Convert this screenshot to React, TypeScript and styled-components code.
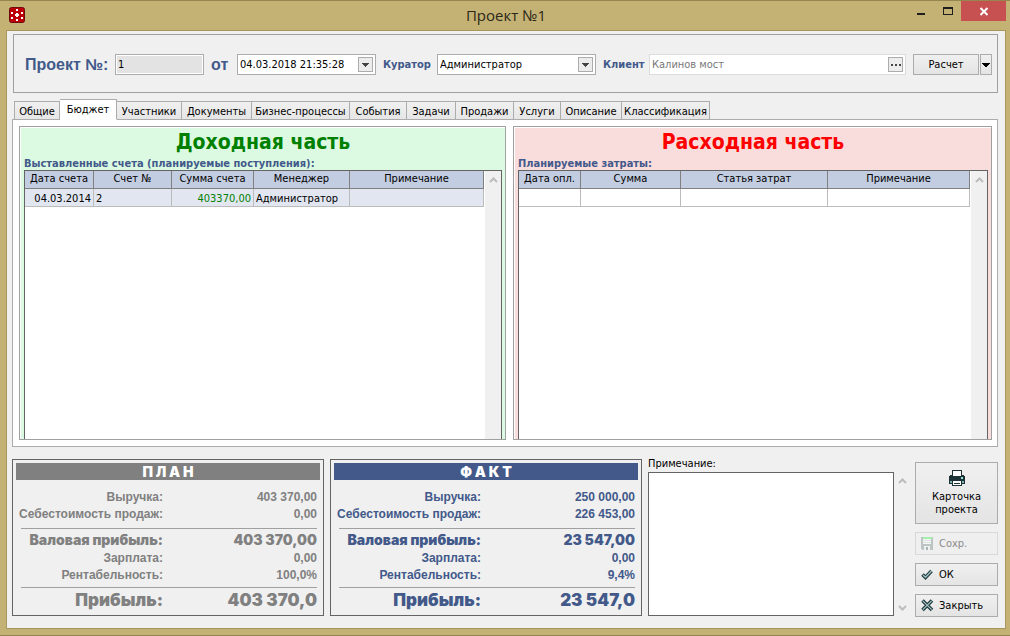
import React from "react";
import styled, { createGlobalStyle, css } from "styled-components";

const ui = `"DejaVu Sans Condensed", "DejaVu Sans", Tahoma, sans-serif`;
const arial = `"Liberation Sans", Arial, sans-serif`;
const heavy = `Inter, "Arial Black", sans-serif`;
const blue = "#42598a";
const line = "#a0a0a0";

const Global = createGlobalStyle`
  * { box-sizing: border-box; }
  body { margin: 0; font-family: ${ui}; font-stretch: condensed; font-size: 11px; line-height: 14px; color: #000; }
  button, input, select, textarea { font: inherit; color: inherit; border-radius: 0; }
`;

const Window = styled.main`
  min-height: 100vh;
  display: flex;
  flex-direction: column;
  background: #c4b174;
  border: 1px solid #95854f;
  border-width: 1px 0;
  padding: 0 4px 6px 6px;
`;

const TitleBar = styled.header`
  height: 29px;
  display: grid;
  grid-template-columns: 1fr auto 1fr;
  align-items: start;
`;
const AppIcon = styled.svg`
  width: 16px;
  height: 16px;
  margin: 6px 0 0 3px;
`;
const Title = styled.h1`
  margin: 0;
  font: 400 15px/29px "Open Sans", sans-serif;
  color: #2b2718;
`;
const Controls = styled.div`
  display: flex;
  justify-content: flex-end;
`;
const Control = styled.button<{ $w: number; $close?: boolean }>`
  width: ${(p) => p.$w}px;
  height: 20px;
  padding: 0;
  border: 0;
  background: ${(p) => (p.$close ? "#c75050" : "transparent")};
  svg { display: block; margin: 0 auto; }
`;

const Client = styled.div`
  flex: 1;
  display: flex;
  flex-direction: column;
  border: 1px solid #a8975c;
  background: #f0f0f0;
  padding: 3px 7px 12px 5px;
`;

const Toolbar = styled.form`
  display: flex;
  align-items: center;
  height: 59px;
  margin-left: 1px;
  padding: 2px 5px 0 11px;
  border: 1px solid ${line};
`;
const Label = styled.label<{ $w: number; $big?: boolean }>`
  flex: none;
  width: ${(p) => p.$w}px;
  color: ${blue};
  font-weight: 700;
  white-space: nowrap;
  ${(p) => p.$big && css`font: 700 16px/20px ${arial};`}
`;
const Field = styled.div<{ $w?: number; $muted?: boolean; $fill?: string }>`
  position: relative;
  flex: ${(p) => (p.$w ? `none` : `1 1 0`)};
  ${(p) => p.$w && css`width: ${p.$w}px;`}
  height: 21px;
  display: flex;
  align-items: center;
  padding: 1px;
  margin-right: 7px;
  border: 1px solid ${(p) => (p.$muted ? "#dcdcdc" : "#acacac")};
  background: #fff;
  color: ${(p) => (p.$muted ? "#787878" : "#000")};
  input, select {
    flex: 1;
    min-width: 0;
    width: 100%;
    height: 17px;
    padding: 0 1px;
    border: 0;
    outline: 0;
    appearance: none;
    background: ${(p) => p.$fill ?? "transparent"};
  }
`;
const FieldButton = styled.button`
  flex: none;
  width: 15px;
  height: 15px;
  margin-right: 1px;
  padding: 0;
  border: 1px solid #acacac;
  background: #ececec;
  svg { display: block; margin: auto; }
`;
const SelectArrow = styled.span`
  position: absolute;
  right: 2px;
  top: 2px;
  width: 15px;
  height: 15px;
  border: 1px solid #acacac;
  background: #ececec;
  pointer-events: none;
  svg { display: block; }
`;
const Button = styled.button<{ $w?: number; $h?: number; $stack?: boolean }>`
  flex: none;
  display: flex;
  align-items: center;
  flex-direction: ${(p) => (p.$stack ? "column" : "row")};
  justify-content: ${(p) => (p.$stack || p.$w ? "center" : "flex-start")};
  gap: ${(p) => (p.$stack ? 4 : 5)}px;
  width: ${(p) => (p.$w ? `${p.$w}px` : "100%")};
  height: ${(p) => p.$h ?? 23}px;
  padding: 0 ${(p) => (p.$w ? 0 : 5)}px;
  line-height: 13px;
  border: 1px solid #acacac;
  background: linear-gradient(#f0f0f0, #e4e4e4);
  &:disabled { color: #8b8b8b; border-color: #d9d9d9; background: #efefef; }
`;
const SplitButton = styled.div`
  flex: none;
  display: flex;
  gap: 1px;
`;

const Tabs = styled.div`
  display: flex;
  align-items: flex-end;
  height: 21px;
  margin: 6px 0 -1px 2px;
`;
const Tab = styled.button<{ $w: number; $active?: boolean }>`
  width: ${(p) => p.$w}px;
  height: 19px;
  padding: 2px 0 0;
  white-space: nowrap;
  border: 1px solid #acacac;
  border-left-width: 0;
  background: linear-gradient(#f0f0f0, #e6e6e6);
  &:first-child { border-left-width: 1px; }
  ${(p) => p.$active && css`
    height: 21px;
    padding: 0;
    background: #fff;
    border-bottom-color: #fff;
    position: relative;
  `}
`;
const Pane = styled.section`
  flex: 1;
  display: grid;
  grid-template-columns: 487fr 479fr;
  gap: 7px;
  padding: 6px 5px 6px 6px;
  border: 1px solid #acacac;
  background: #fff;
`;
const Side = styled.section<{ $bg: string }>`
  display: flex;
  flex-direction: column;
  min-width: 0;
  padding: 2px 3px 0 4px;
  border: 1px solid ${line};
  background: ${(p) => p.$bg};
  box-shadow: inset 1px 1px 0 #fff;
`;
const SideTitle = styled.h2<{ $color: string }>`
  margin: 0;
  text-align: center;
  font-size: 21px;
  line-height: 26px;
  color: ${(p) => p.$color};
`;
const SideCaption = styled.h3`
  margin: 0;
  height: 15px;
  font-size: 11px;
  line-height: 17px;
  color: ${blue};
`;
const GridBox = styled.div`
  flex: 1;
  display: flex;
  justify-content: space-between;
  gap: 1px;
  border: 1px solid #646464;
  border-bottom: 0;
  background: #fff;
`;
const Grid = styled.table`
  flex: 1;
  align-self: flex-start;
  table-layout: fixed;
  border-collapse: separate;
  border-spacing: 0;
  th, td {
    height: 18px;
    padding: 0 2px;
    border: 0 solid #808080;
    border-width: 0 1px 1px 0;
    white-space: nowrap;
    overflow: hidden;
    line-height: 15px;
  }
  th { font-weight: 400; background: #c3cde2; padding-bottom: 2px; }
  td { border-color: #bcbcbc; padding-top: 2px; }
`;
const Row = styled.tr<{ $selected?: boolean }>`
  background: ${(p) => (p.$selected ? "#e2e6f1" : "#fff")};
`;
const Cell = styled.td<{ $right?: boolean; $color?: string }>`
  text-align: ${(p) => (p.$right ? "right" : "left")};
  color: ${(p) => p.$color ?? "#000"};
`;
const ScrollTrack = styled.div<{ $wide?: boolean }>`
  flex: none;
  width: ${(p) => (p.$wide ? 17 : 16)}px;
  display: flex;
  flex-direction: column;
  justify-content: space-between;
  align-items: center;
  padding: 5px 0 4px;
  background: #f0f0f0;
`;

const Bottom = styled.footer`
  display: flex;
  margin-top: 12px;
  height: 157px;
`;
const Card = styled.section<{ $color: string }>`
  flex: 0 1 312px;
  margin-right: 6px;
  padding: 3px;
  border: 1px solid #646464;
  color: ${(p) => p.$color};
`;
const CardTitle = styled.h2<{ $bg: string }>`
  margin: 0 0 9px;
  height: 17px;
  text-align: center;
  font: 900 14px/17px ${heavy};
  white-space: pre;
  color: #fff;
  background: ${(p) => p.$bg};
`;
const Totals = styled.dl`
  margin: 0;
  padding: 0 3px 0 5px;
`;
const TotalRow = styled.div<{ $size?: "gross" | "net" }>`
  display: grid;
  grid-template-columns: 142px 1fr;
  text-align: right;
  white-space: nowrap;
  font: 700 12px/17px ${arial};
  dt, dd { margin: 0; }
  dt { justify-self: end; }
  ${(p) => p.$size === "gross" && css`
    margin-top: 5px;
    padding-top: 1px;
    border-top: 1px solid ${line};
    font: 900 14px/20px ${heavy};
  `}
  ${(p) => p.$size === "net" && css`
    margin-top: 3px;
    border-top: 1px solid ${line};
    font: 900 17px/24px ${heavy};
  `}
`;
const Note = styled.div`
  flex: 1;
  min-width: 0;
  display: flex;
  flex-direction: column;
  label { height: 13px; line-height: 10px; }
`;
const NoteBody = styled.div`
  display: flex;
  height: 144px;
  textarea {
    flex: 1;
    min-width: 0;
    resize: none;
    border: 1px solid #646464;
    background: #fff;
    outline: 0;
  }
`;
const Actions = styled.div`
  flex: none;
  width: 83px;
  margin-left: 4px;
  padding-top: 3px;
  display: flex;
  flex-direction: column;
  gap: 8px;
`;

const Down = ({ color = "#444" }: { color?: string }) => (
  <svg width="13" height="13" shapeRendering="crispEdges"><path d="M3 5h7v1H3zM4 6h5v1H4zM5 7h3v1H5zM6 8h1v1H6z" fill={color} /></svg>
);
const Chevron = ({ down }: { down?: boolean }) => (
  <svg width="9" height="8" viewBox="0 0 9 8"><path d={down ? "M1 2L4.5 5.5L8 2" : "M1 6L4.5 2.5L8 6"} fill="none" stroke="#bdbdbd" strokeWidth="2" /></svg>
);
const Printer = () => (
  <svg width="16" height="16" shapeRendering="crispEdges">
    <path d="M3 0h10v5h2v1h1v8h-3v2H3v-2H0V6h1V5h2z" fill="#1d3336" />
    <path d="M4 1h8v5H4zM4 11h8v4H4z" fill="#fff" />
    <path d="M5 13h6v1H5z" fill="#1d3336" />
    <path d="M12 7h2v2h-2z" fill="#8fe0e0" />
    <path d="M1 11h2v2H1zM13 11h2v2h-2z" fill="#7fb0b0" />
  </svg>
);
const Floppy = () => (
  <svg width="13" height="13" shapeRendering="crispEdges">
    <path d="M0 0h12v13H1v-1H0z" fill="#bcc5c4" />
    <path d="M2 0h9v2H2z" fill="#a5efac" />
    <path d="M2 2h8v5H2z" fill="#f4f7f6" />
    <path d="M2 3h8v1H2zM2 5h8v1H2z" fill="#dce3e1" />
    <path d="M3 9h6v4H3z" fill="#eef2f1" />
    <path d="M5 10h2v3H5z" fill="#a9b4b2" />
  </svg>
);
const Check = () => (
  <svg width="13" height="13" viewBox="0 0 13 13">
    <path d="M1.5 6.5L4.5 9.5L10.5 3" fill="none" stroke="#223b3f" strokeWidth="3.6" />
    <path d="M2 7L4.5 9.3L10.5 3" fill="none" stroke="#9fc3c3" strokeWidth="1.3" />
  </svg>
);
const Cross = () => (
  <svg width="13" height="13" viewBox="0 0 13 13">
    <path d="M1.5 1.5L11 11M11 1.5L1.5 11" fill="none" stroke="#223b3f" strokeWidth="3.6" />
    <path d="M1.8 1.8L10.7 10.7M10.7 1.8L1.8 10.7" fill="none" stroke="#a9caca" strokeWidth="1.1" />
  </svg>
);

const tabs: [string, number][] = [
  ["Общие", 46], ["Бюджет", 57], ["Участники", 65], ["Документы", 70], ["Бизнес-процессы", 98], ["События", 57],
  ["Задачи", 49], ["Продажи", 58], ["Услуги", 47], ["Описание", 61], ["Классификация", 88],
];

type ColumnSpec = [string, number];
function DataGrid({ columns, children }: { columns: ColumnSpec[]; children: React.ReactNode }) {
  const total = columns.reduce((sum, c) => sum + c[1], 0);
  return (
    <GridBox>
      <Grid>
        <colgroup>{columns.map(([name, w]) => <col key={name} style={{ width: `${(w / total) * 100}%` }} />)}</colgroup>
        <thead><tr>{columns.map(([name]) => <th key={name} scope="col">{name}</th>)}</tr></thead>
        <tbody>{children}</tbody>
      </Grid>
      <ScrollTrack><Chevron /></ScrollTrack>
    </GridBox>
  );
}

function Summary({ title, bg, color, values }: { title: string; bg: string; color: string; values: string[] }) {
  const names = ["Выручка:", "Себестоимость продаж:", "Валовая прибыль:", "Зарплата:", "Рентабельность:", "Прибыль:"];
  return (
    <Card $color={color}>
      <CardTitle $bg={bg}>{title}</CardTitle>
      <Totals>
        {names.map((name, i) => (
          <TotalRow key={name} $size={i === 2 ? "gross" : i === 5 ? "net" : undefined}>
            <dt>{name}</dt>
            <dd>{values[i]}</dd>
          </TotalRow>
        ))}
      </Totals>
    </Card>
  );
}

export default function App() {
  return (
    <>
      <Global />
      <Window>
        <TitleBar>
          <AppIcon viewBox="0 0 16 16">
            <rect x="0.5" y="0.5" width="15" height="15" rx="2" fill="#bd0008" stroke="#6d0a0c" />
            <path d="M7 2h2v2H7zM7 12h2v2H7zM2 5h2v2H2zM12 5h2v2h-2zM2 10h2v2H2zM12 10h2v2h-2zM7 6h2v1h1v2H9v1H7V9H6V7h1z" fill="#fff" />
          </AppIcon>
          <Title>Проект №1</Title>
          <Controls>
            <Control $w={27} aria-label="Свернуть"><svg width="27" height="20"><path d="M10 12h8v2h-8z" fill="#1e1e1e" /></svg></Control>
            <Control $w={27} aria-label="Развернуть"><svg width="27" height="20"><path d="M9 6h10v8H9zM10 8v5h8V8z" fillRule="evenodd" fill="#1e1e1e" /></svg></Control>
            <Control $w={45} $close aria-label="Закрыть окно"><svg width="45" height="20"><path d="M19.5 7L26.5 14M26.5 7L19.5 14" stroke="#fff" strokeWidth="2" /></svg></Control>
          </Controls>
        </TitleBar>
        <Client>
          <Toolbar onSubmit={(e) => e.preventDefault()}>
            <Label $w={90} $big htmlFor="num">Проект №:</Label>
            <Field $w={89} $fill="#e3e3e3"><input id="num" defaultValue="1" /></Field>
            <Label $w={26} $big htmlFor="date">от</Label>
            <Field $w={139}>
              <input id="date" defaultValue="04.03.2018 21:35:28" />
              <FieldButton type="button" aria-label="Выбрать дату"><Down /></FieldButton>
            </Field>
            <Label $w={54} htmlFor="curator">Куратор</Label>
            <Field $w={159}>
              <select id="curator"><option>Администратор</option></select>
              <SelectArrow><Down /></SelectArrow>
            </Field>
            <Label $w={46} htmlFor="client">Клиент</Label>
            <Field $muted>
              <input id="client" defaultValue="Калинов мост" />
              <FieldButton type="button" aria-label="Выбрать клиента">
                <svg width="13" height="13" shapeRendering="crispEdges"><path d="M2 6h2v2H2zM6 6h2v2H6zM10 6h2v2h-2z" fill="#444" /></svg>
              </FieldButton>
            </Field>
            <SplitButton>
              <Button type="button" $w={66} $h={21}>Расчет</Button>
              <Button type="button" $w={12} $h={21} aria-label="Варианты расчета">
                <svg width="8" height="4" shapeRendering="crispEdges"><path d="M0 0h8v1H0zM1 1h6v1H1zM2 2h4v1H2zM3 3h2v1H3z" /></svg>
              </Button>
            </SplitButton>
          </Toolbar>
          <Tabs role="tablist">
            {tabs.map(([name, w], i) => (
              <Tab key={name} role="tab" aria-selected={i === 1} $w={w} $active={i === 1}>{name}</Tab>
            ))}
          </Tabs>
          <Pane>
            <Side $bg="#dcfae2">
              <SideTitle $color="#008000">Доходная часть</SideTitle>
              <SideCaption>Выставленные счета (планируемые поступления):</SideCaption>
              <DataGrid columns={[["Дата счета", 69], ["Счет №", 78], ["Сумма счета", 82], ["Менеджер", 96], ["Примечание", 134]]}>
                <Row $selected>
                  <Cell $right>04.03.2014</Cell>
                  <Cell>2</Cell>
                  <Cell $right $color="#008000">403370,00</Cell>
                  <Cell>Администратор</Cell>
                  <Cell />
                </Row>
              </DataGrid>
            </Side>
            <Side $bg="#f9dcdc">
              <SideTitle $color="#ff0000">Расходная часть</SideTitle>
              <SideCaption>Планируемые затраты:</SideCaption>
              <DataGrid columns={[["Дата опл.", 62], ["Сумма", 100], ["Статья затрат", 147], ["Примечание", 142]]}>
                <Row><Cell /><Cell /><Cell /><Cell /></Row>
              </DataGrid>
            </Side>
          </Pane>
          <Bottom>
            <Summary title="П Л А Н" bg="#808080" color="#808080" values={["403 370,00", "0,00", "403 370,00", "0,00", "100,0%", "403 370,0"]} />
            <Summary title="Ф А К Т" bg={blue} color={blue} values={["250 000,00", "226 453,00", "23 547,00", "0,00", "9,4%", "23 547,0"]} />
            <Note>
              <label htmlFor="note">Примечание:</label>
              <NoteBody>
                <textarea id="note" />
                <ScrollTrack $wide><Chevron /><Chevron down /></ScrollTrack>
              </NoteBody>
            </Note>
            <Actions>
              <Button $stack $h={62}><Printer /><span>Карточка<br />проекта</span></Button>
              <Button disabled><Floppy />Сохр.</Button>
              <Button><Check />ОК</Button>
              <Button><Cross />Закрыть</Button>
            </Actions>
          </Bottom>
        </Client>
      </Window>
    </>
  );
}
